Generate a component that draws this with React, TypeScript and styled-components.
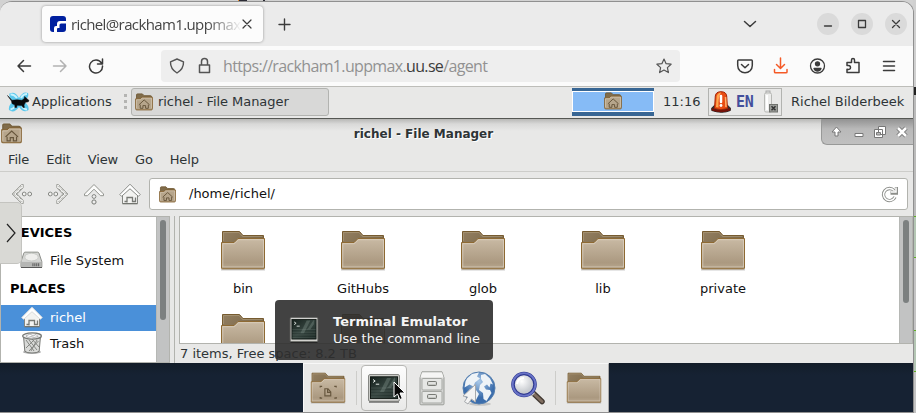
import React from "react";
import styled, { createGlobalStyle, css } from "styled-components";

const Global = createGlobalStyle`
  *{box-sizing:border-box}
  body{margin:0;overflow:hidden;background:#d3d3d3}
  svg{display:block;flex:none}
`;

const Screen = styled.div`
  position:relative;width:916px;height:413px;overflow:hidden;display:flex;
  background:#d2d2d2;font:13px/17px "DejaVu Sans",sans-serif;color:#2e3436;
`;
const Behind = styled.div`
  position:absolute;left:913px;top:0;width:3px;height:413px;
  background:linear-gradient(#d0d0d0 0 87px,#222 87px 95px,#bbb 95px 216px,#5eb01e 216px 217px,#b4c6b4 217px 257px,#5eb01e 257px 258px,#c4c4c4 258px 330px,#5eb01e 330px 331px,#b4c6b4 331px 371px,#5eb01e 371px 372px,#c4c4c4 372px);
`;
const TopHints = styled.div`
  position:absolute;left:238px;top:0;width:30px;height:2px;
  background:linear-gradient(90deg,#ef8b22 0 1px,#2b2b35 1px 9px,#ccc 9px 25px,#2b2b35 25px 27px,#ccc 27px);
`;
const Browser = styled.div`
  position:relative;width:914px;height:412px;margin-top:1px;display:flex;flex-direction:column;overflow:hidden;
  border:1px solid #909090;border-width:1px 1px 1px 0;border-radius:12px 12px 0 0;background:#ebebeb;
`;
const TabBar = styled.div`
  height:44px;flex:none;display:flex;align-items:flex-start;padding:4px 6px 0 42px;background:#ebebeb;
  font-family:"Open Sans","Noto Sans",sans-serif;
`;
const Tab = styled.div`
  width:221px;height:36px;display:flex;align-items:center;padding:0 9px 0 8px;border-radius:4px;
  background:#fcfcfc;box-shadow:0 0 3px rgba(0,0,0,.38);
`;
const TabTitle = styled.div`
  width:174px;margin-left:5px;white-space:nowrap;font-size:15px;line-height:24px;letter-spacing:-.62px;color:#444;
  mask-image:linear-gradient(90deg,#000 135px,transparent 171px);
`;
const TabClose = styled.div`margin-left:-3px;`;
const NewTab = styled.div`margin:12px 0 0 15px;`;
const TabTools = styled.div`margin-left:auto;height:36px;display:flex;align-items:center;gap:12px;`;
const ListTabs = styled.div`margin-right:48px;`;
const Round = styled.div`
  width:22px;height:22px;border-radius:50%;background:#dadada;display:grid;place-items:center;
`;
const NavBar = styled.div`
  height:40px;flex:none;display:flex;align-items:center;background:#fbfbfb;padding-left:16px;
`;
const NavIcons = styled.div`display:flex;width:145px;gap:20px;`;
const UrlBar = styled.div`
  width:519px;height:32px;border-radius:4px;background:#eee;display:flex;align-items:center;padding:0 8px;
`;
const Url = styled.div`
  margin-left:8px;flex:1;white-space:nowrap;font:16px/24px "Open Sans","Noto Sans",sans-serif;letter-spacing:-.65px;color:#929292;
  b{font-weight:400;color:#3c3c3c}
`;
const Lock = styled.div`margin-left:9px;margin-right:1px;`;
const NavTools = styled.div`display:flex;gap:16px;margin-left:55px;`;

const Panel = styled.div`
  height:32px;flex:none;display:flex;align-items:center;border-top:1px solid #bdbdb9;background:#e8e8e7;
  white-space:nowrap;padding:0 0 2px 7px;
`;
const AppsLabel = styled.div`width:84px;margin-left:2px;letter-spacing:.04px;`;
const Grip = styled.div`
  width:3px;height:15px;margin:0 4px 0 8px;background:repeating-linear-gradient(#b4b4b2 0 3px,transparent 3px 6px);
`;
const TaskButton = styled.div`
  width:198px;height:28px;display:flex;align-items:center;padding-left:3px;gap:5px;letter-spacing:-.05px;
  border:1px solid #b2b3b0;border-radius:3px;background:#d8d8d7;
`;
const Pager = styled.div`
  width:82px;height:28px;margin-left:243px;border:solid #386694;border-width:3px 0 4px;background:#fff;display:flex;padding:1px;
`;
const PagerWindow = styled.div`flex:1;background:#86bbf6;display:grid;place-items:center;`;
const Clock = styled.div`width:45px;margin-left:9px;`;
const Tray = styled.div`
  width:74px;height:28px;border:1px solid #b2b3b0;display:flex;align-items:center;padding-left:2px;
`;
const Lang = styled.div`
  margin-left:5px;width:26px;font:bold 15px/20px "DejaVu Sans Mono",monospace;letter-spacing:-.2px;color:#434f9c;
`;
const User = styled.div`margin-left:9px;`;

const Desktop = styled.div`flex:1;min-height:0;background:linear-gradient(#131d29 245px,#162233 257px);`;
const Manager = styled.div`
  height:245px;display:flex;flex-direction:column;border-top:1px solid #555753;background:#e8e8e7;overflow:hidden;
`;
const TitleBar = styled.div`
  height:27px;flex:none;display:flex;align-items:flex-start;background:linear-gradient(#b7b7b5,#d9d9d8 5px,#e8e8e7 12px);
`;
const TitleIcon = styled.div`padding:4px 0 0 1px;width:24px;`;
const Title = styled.div`flex:1;padding-top:7px;margin-left:2px;text-align:center;font-weight:bold;font-size:12px;text-shadow:1px 1px #fff;`;
const Controls = styled.div`
  width:92px;height:26px;display:flex;align-items:center;padding:0 0 0 4px;
  border:solid #989998;border-width:0 0 1px 1px;border-radius:0 0 0 6px;background:linear-gradient(#929292,#b9b9b9 10px,#c0c0c0);
`;
const MenuBar = styled.div`
  height:26px;flex:none;display:flex;gap:17px;padding:5px 0 0 8px;border-bottom:1px solid #cdcdca;letter-spacing:-.15px;
`;
const ToolBar = styled.div`height:44px;flex:none;display:flex;align-items:center;padding:0 5px 0 9px;`;
const ToolIcons = styled.div`display:flex;width:140px;gap:14px;padding-left:2px;`;
const PathBar = styled.div`
  flex:1;height:32px;border:1px solid #b2b3ae;border-radius:3px;background:#fff;color:#111;
  display:flex;align-items:center;padding:0 9px;
`;
const PathText = styled.div`flex:1;margin-left:13px;padding-bottom:1px;`;
const Body = styled.div`flex:1;min-height:0;display:flex;`;
const Side = styled.div`
  width:170px;border:1px solid #b2b3ae;display:flex;background:#fff;color:#111;
`;
const SideList = styled.div`width:155px;white-space:nowrap;`;
const Heading = styled.div`
  height:32px;display:flex;align-items:center;padding:0 0 1px 9px;font-weight:bold;color:#000;
`;
const Place = styled.div<{ $active?: boolean; $h: number }>`
  height:${p => p.$h}px;display:flex;align-items:center;gap:7px;padding:0 0 2px 19px;letter-spacing:-.03px;
  ${p => p.$active && css`background:#4a90d9;color:#fff;`}
`;
const PlaceIcon = styled.div`width:23px;display:grid;place-items:center;`;
const ScrollTrack = styled.div`
  flex:1;background:#c2c3c3;padding:3px 3px;border-left:1px solid #b6b8b5;display:flex;justify-content:center;
`;
const Thumb = styled.div<{ $h: number }>`width:6px;height:${p => p.$h}px;border-radius:3px;background:#7c8080;`;
const Splitter = styled.div`width:5px;border-right:1px solid #b2b3ae;`;
const Main = styled.div`flex:1;min-width:0;padding-left:4px;display:flex;flex-direction:column;`;
const FileView = styled.div`
  height:128px;flex:none;border:1px solid #b2b3ae;background:#fff;display:flex;overflow:hidden;
`;
const Grid = styled.div`
  width:719px;flex:none;display:grid;grid-template-columns:repeat(5,120px);grid-auto-rows:83px;padding:13px 0 0 3px;color:#111;
`;
const File = styled.div`display:flex;flex-direction:column;align-items:center;gap:9px;`;
const Status = styled.div`padding:1px 0 0 1px;white-space:nowrap;`;

const Handle = styled.div`
  position:absolute;left:0;top:202px;width:22px;height:62px;border-radius:0 5px 5px 0;background:#d9d9d5;
  border:1px solid #c4c4c0;border-left:0;display:grid;place-items:center;padding-bottom:1px;
`;
const Tooltip = styled.div`
  position:absolute;left:275px;top:300px;width:218px;height:60px;border-radius:4px;background:rgba(45,45,45,.9);
  display:flex;align-items:center;padding-left:14px;gap:14px;color:#f5f5f5;white-space:nowrap;letter-spacing:.03px;
`;
const TipTitle = styled.div`font-weight:bold;`;
const Dock = styled.div`
  position:absolute;left:303px;top:363px;width:306px;height:49px;background:#e8e8e7;border:1px solid #f8f8f8;border-right-color:#aaa;border-bottom:0;
  display:flex;align-items:center;
`;
const DockItem = styled.div<{ $hot?: boolean }>`
  width:${p => p.$hot ? 46 : 48}px;height:46px;display:grid;place-items:center;
  ${p => p.$hot && css`background:linear-gradient(#fdfdfd,#e9e9e8);border:1px solid #b7b7b4;border-radius:4px;margin-right:1px;`}
`;
const DockLine = styled.div`width:1px;height:34px;background:#cdcdca;margin:0 4px;`;
const Cursor = styled.div`position:absolute;left:393px;top:381px;`;

const Folder = ({ w = 46, h = 41, mark = false }: { w?: number; h?: number; mark?: boolean }) => {
  const id = React.useId();
  return (
    <svg width={w} height={h} viewBox="0 0 46 41">
      <defs>
        <linearGradient id={id + "f"} x2="0" y2="1"><stop stopColor="#c9baa4" /><stop offset=".8" stopColor="#ab9980" /><stop offset="1" stopColor="#b9a890" /></linearGradient>
        <linearGradient id={id + "b"} x2="1" y2="1"><stop stopColor="#937f61" /><stop offset="1" stopColor="#695636" /></linearGradient>
      </defs>
      <path d="M1 39.500h44" stroke="#000" strokeOpacity=".2" strokeWidth="2" />
      <path d="M2.500 38V1.500h17l3.500 4h20.500V38z" fill={`url(#${id}b)`} stroke="#765b30" />
      <path d="M3.500 11V2.500H19l3.500 4h20" fill="none" stroke="#ac9978" strokeWidth=".7" />
      <path d="M1.500 12.500H14l4-4h26.500v29.500q0 .8-1 .8h-41q-1 0-1-.8z" fill={`url(#${id}f)`} stroke="#8e6a33" />
      <path d="M2.800 37V13.700H14.500l4-4h25V37" fill="none" stroke="#e4dacb" strokeWidth=".9" opacity=".65" />
      <path d="M2.500 36.500h41" stroke="#d0c4b1" opacity=".5" />
      {mark && <path d="M19 21.500h4l3.500 4v5h-7.500zM22.500 22v4h4M13 20v-1.500h2.500M31 18.500h2.500V20M13 32v1.500h2.500M31 33.500h2.500V32" fill="none" stroke="#67573e" strokeWidth="1.500" />}
    </svg>
  );
};

const HomeFolder = ({ s = 18 }: { s?: number }) => (
  <svg width={s} height={s} viewBox="0 0 20 20">
    <path d="M1.700 17V2q0-1 1-1h5.500l2 2h7q1.200 0 1.200 1v13z" fill="#806c4b" stroke="#715a35" />
    <path d="M.7 6.500h5l2-1.800h11.600v12.800q0 1.300-1.200 1.300H2q-1.300 0-1.300-1.300z" fill="#b6a58b" stroke="#825f2d" />
    <path d="M1.700 17V7.500H6l2-1.800h10.300V17" fill="none" stroke="#d5c8b4" strokeWidth=".8" />
    <path d="M4.300 13.200 10.200 7.700l6 5.500M5.800 13v4h3v-3h3v3h3v-4" fill="none" stroke="#67563c" strokeWidth="1.100" />
  </svg>
);

const House = ({ solid = false }: { solid?: boolean }) => (
  <svg width="22" height="22" viewBox="0 0 22 22">
    <path d="M3.500 11v9.500h15V11L11 5z" fill="#f3f3f1" stroke="#858783" />
    <path d="M5.500 18.500h2.500v-4h5.500v4h3v-4M8 14.500v5" fill="none" stroke="#777974" strokeWidth="1.300" />
    <path d="M.8 11.500 11 1.200l10.200 10.300-1.800 1.800L11 5.800l-8.400 7.500z" fill="#fff" stroke={solid ? "#ddd" : "#8a8c88"} strokeLinejoin="round" />
    <path d="M3.500 20.800h15" stroke="#6c6e69" />
  </svg>
);

const Arrow = ({ flip = false }: { flip?: boolean }) => (
  <svg width="22" height="22" viewBox="0 0 22 22">
    <g transform={flip ? "matrix(-1 0 0 1 22 0)" : undefined}>
      <path d="M1 11 10.500 1.500h1.800v3.200L6.200 11l6.100 6.300v3.200h-1.800z" fill="#f1f1ef" stroke="#a4a5a0" strokeLinejoin="round" />
      <path d="m2.500 11 8.500-8.500m-6 8.500 6-6m-6 6 6 6m-8.500-6 8.500 8.500" stroke="#777974" strokeDasharray="1 1" fill="none" />
      <circle cx="13.200" cy="11" r="1.900" fill="#f1f1ef" stroke="#858783" />
      <circle cx="18.700" cy="11" r="1.900" fill="#f1f1ef" stroke="#858783" />
    </g>
  </svg>
);

const UpArrow = () => (
  <svg width="22" height="22" viewBox="0 0 22 22">
    <path d="M1.500 11 11 1.500l9.500 9.500v1.700h-3L11 6.200l-6.500 6.500h-3z" fill="#fbfbfa" stroke="#92948f" strokeLinejoin="round" />
    <circle cx="11" cy="13.500" r="1.900" fill="#eee" stroke="#858783" /><circle cx="11" cy="19" r="2.100" fill="#eee" stroke="#777974" />
  </svg>
);

const Terminal = ({ w, h }: { w: number; h: number }) => {
  const id = React.useId();
  return (
    <svg width={w} height={h} viewBox="0 0 32 29">
      <defs><linearGradient id={id} x2="1" y2="1"><stop stopColor="#15201c" /><stop offset=".5" stopColor="#34433e" /><stop offset="1" stopColor="#1b2824" /></linearGradient></defs>
      <path d="M1 28h30" stroke="#000" strokeOpacity=".4" strokeWidth="2" />
      <rect x=".7" y=".7" width="30.600" height="26.500" rx="1" fill="#dfdfdc" stroke="#6d6e6a" />
      <rect x="2.500" y="2.800" width="27" height="21.800" fill={`url(#${id})`} stroke="#111915" />
      <path d="M12 18 19 4h4l-7 14zM21 12l6-9v5l-4 6h-4z" fill="#7b8b85" opacity=".4" />
      <path d="m5 5.500 2.200 1.500L5 8.500M7.800 10.200h3.400" stroke="#e2e8e4" fill="none" />
      <path d="M3 14h26M3 17h26M3 20h26M3 23h26" stroke="#97a59f" opacity=".2" />
    </svg>
  );
};

const Drive = () => (
  <svg width="23" height="18" viewBox="0 0 24 18">
    <path d="M5.300.8h13q1 0 1.500 1l3 9v5q0 1-1 1H2q-1 0-1-1v-5l3-9q.4-1 1.300-1z" fill="#d4d5d3" stroke="#888a85" />
    <ellipse cx="12" cy="6" rx="7" ry="4" fill="#eeeeec" stroke="#c8cac6" />
    <path d="M1.500 11h20.800v5H1.500z" fill="#b5b6b4" /><path d="M13 14h7" stroke="#555" strokeWidth="3" strokeDasharray="1 1" /><path d="M1 16.800h22" stroke="#555" />
  </svg>
);

const Trash = () => (
  <svg width="22" height="22" viewBox="0 0 22 22">
    <ellipse cx="11" cy="20" rx="9" ry="1.800" fill="#555" opacity=".5" />
    <path d="m2.500 4 1.300 15q1 2 7.200 2t7.200-2l1.300-15z" fill="#d9dad8" stroke="#777975" />
    <path d="m5 8 8 11m-5-11 8 10m-5-11 7 8m-.5-6L8 19m5-11-8 8m11-8-6 11" stroke="#858783" />
    <ellipse cx="11" cy="4" rx="9.400" ry="3.100" fill="#eee" stroke="#777975" strokeWidth="1.300" />
    <path d="m5 4 4-2 3 2 3-1.500 2 2-4 1-3-1-3 1z" fill="#fff" stroke="#999" strokeWidth=".7" />
  </svg>
);

const Cabinet = () => (
  <svg width="26" height="35" viewBox="0 0 26 35">
    <path d="M3 .8h20l2 6v26q0 1-1 1H2q-1 0-1-1v-26z" fill="#d4d5d3" stroke="#9b9d99" />
    <path d="M3 1.500h20l1.500 5h-23z" fill="#f5f5f4" />
    {[7.5, 20.5].map((y) => (
      <g key={y}>
        <rect x="3" y={y} width="20" height="11.500" rx="1" fill="#e6e7e5" stroke="#a5a7a3" />
        <rect x="8.500" y={y + 3} width="9" height="4" rx="1" fill="#c4c6c2" stroke="#787a75" />
        <path d={`M9.500 ${y + 4.5}h7`} stroke="#fff" />
      </g>
    ))}
  </svg>
);

const Globe = () => (
  <svg width="34" height="35" viewBox="0 0 34 35">
    <defs><radialGradient id="sea" cy=".3"><stop stopColor="#a9c8e8" /><stop offset="1" stopColor="#3b6dac" /></radialGradient></defs>
    <ellipse cx="18" cy="33" rx="11" ry="1.800" opacity=".15" />
    <circle cx="17" cy="17" r="16" fill="url(#sea)" stroke="#547eae" />
    <path d="M5 7.500 10 3l7-1.500-2 4 3 2-5 4-1.500 4-4-2-5 3 1-6zM19 4l4-1 5 4.500 3 6-2.500-1-1 4-2.500-3-3 2 2 3 4 .5 1.500 3-5 8-3-2-.5-6-4-3 1-5 3-3-2-3zM8 18l6 1 3 4-4 8-3-2-1-5-3-3z" fill="#eef3f7" />
    <path d="M13.500 13.500v17.500l-4-3-3.500 5-3.500-2.300 3-4.700-4.500-1z" fill="#f3f3f3" stroke="#a6a9ac" strokeLinejoin="round" />
  </svg>
);

const Magnifier = () => (
  <svg width="35" height="35" viewBox="0 0 35 35">
    <defs><radialGradient id="lens" cx=".4" cy=".35"><stop stopColor="#fff" /><stop offset="1" stopColor="#c8cbd0" /></radialGradient></defs>
    <path d="m22 21 10 9.500" stroke="#403831" strokeWidth="5.500" strokeLinecap="round" /><path d="m24 23 8 7.500" stroke="#806e60" strokeWidth="3" strokeLinecap="round" /><path d="m20.500 20.500 3 3" stroke="#c8c9ca" strokeWidth="4" />
    <circle cx="14" cy="13.500" r="11" fill="url(#lens)" stroke="#2f3990" strokeWidth="3.600" /><circle cx="14" cy="13.500" r="11.300" fill="none" stroke="#6973c7" strokeWidth="1.800" />
    <path d="M7 13q1-6 7-6" stroke="#fff" strokeWidth="2" fill="none" />
  </svg>
);

const Line = ({ d, s = 20, c = "#3b3b3b", w = 1.5, children }: { d: string; s?: number; c?: string; w?: number; children?: React.ReactNode }) => (
  <svg width={s} height={s} viewBox={`0 0 ${s} ${s}`} fill="none" stroke={c} strokeWidth={w} strokeLinecap="round" strokeLinejoin="round"><path d={d} />{children}</svg>
);

const Xfce = () => (
  <svg width="23" height="20" viewBox="0 0 23 20">
    <path d="M2.500 1.500Q8-1.500 12 6q4-7.500 9-5 1.500 4-4 8.500 5.500 4 4.500 8.500-5 3.500-9.500-3-5 7-10 3-1-5 4.500-8.500-5-3.500-4-8z" fill="#5cc8ec" />
    <path d="M3.500 2.500Q7 2 10 6M20 2q-4 0-6 4M3.500 17.500Q6 17 8 14.500M20 17.500q-3 0-5-3" stroke="#c9f2fd" strokeWidth="2" fill="none" />
    <path d="m.5 3.500 4.500 4.800Q10 7.300 15 8.300L17.300 6.500l.3-2L19.200 6l2.800 2.500-.7 1.300-2.800.5-1.500 2.700.4 2.500H16l-1.200-2-4.800-.2-.4 2.200H7.800l.1-2.500L5 11.500 4.500 9z" fill="#08090a" stroke="#08090a" strokeWidth=".5" />
  </svg>
);

const Alarm = () => (
  <svg width="20" height="22" viewBox="0 0 20 22">
    <path d="m.8 17 3-3h12.500l3 3v2.500q-8 3.500-18.500 0z" fill="#333" stroke="#222" />
    <path d="M3.500 17.500 4.300 5q.5-4.300 5.700-4.300T15.700 5l.8 12.500Q10 20 3.500 17.500z" fill="#e84d13" stroke="#a52708" />
    <path d="M5 16 5.700 5Q7 1.500 10 1.500q-3 5-2.500 15z" fill="#ffa64e" /><path d="M14.500 6 15 16" stroke="#ffb16c" strokeWidth="1.500" />
    <path d="M10 5v6" stroke="#fff" strokeWidth="2.500" strokeLinecap="round" /><circle cx="10" cy="14.500" r="1.400" fill="#fff" />
    <path d="M.8 17q9 4 18.400 0v2.500q-9 3.500-18.400 0z" fill="#751209" />
  </svg>
);

const Battery = () => (
  <svg width="16" height="24" viewBox="0 0 16 24">
    <rect x="4" y="1" width="4" height="3" fill="#ddd" stroke="#aaa" /><rect x="2.500" y="3" width="7" height="19" rx="1.500" fill="#ececeb" stroke="#b7b8b5" /><path d="M5 5v15" stroke="#fff" strokeWidth="2" />
    <rect x="7.500" y="14.500" width="8" height="7.500" fill="#9a9c98" stroke="#70726e" /><path d="m9.500 16.300 4 4m0-4-4 4" stroke="#333" strokeWidth="1.500" />
  </svg>
);

const Glyph = ({ d }: { d: string }) => (
  <svg width="22" height="20" viewBox="0 0 22 20"><path d={d} fill="#fff" stroke="#777" /></svg>
);

export default function App() {
  return (
    <>
      <Global />
      <Screen>
        <Behind /><TopHints />
        <Browser>
          <TabBar>
            <Tab>
              <svg width="16" height="16" viewBox="0 0 16 16"><rect width="16" height="16" rx="3" fill="#00209f" /><path d="M4 16v-4q0-2 2-2h1V8q0-3 3-3h6v2.500h-5q-1.500 0-1.500 1.500V12H8q-1 0-1 1v3z" fill="#fff" /></svg>
              <TabTitle>richel@rackham1.uppmax</TabTitle>
              <TabClose><Line s={14} w={1.2} d="m3 3 8 8m0-8-8 8" /></TabClose>
            </Tab>
            <NewTab><Line s={13} w={1.4} d="M6.500 1v11M1 6.500h11" /></NewTab>
            <TabTools>
              <ListTabs><Line s={14} d="m1.500 4.500 5.500 5 5.500-5" /></ListTabs>
              <Round><Line s={12} w={1.3} d="M2.500 8h7" /></Round>
              <Round><Line s={12} w={1.3} d="M2.500 2.500h7v7h-7z" /></Round>
              <Round><Line s={12} w={1.3} d="m2.500 2.500 7 7m0-7-7 7" /></Round>
            </TabTools>
          </TabBar>
          <NavBar>
            <NavIcons>
              <Line s={16} d="M14.500 8H2m5.500-5.500L2 8l5.500 5.500" />
              <Line s={16} c="#b2b2b2" d="M1.500 8H14M8.500 2.500 14 8l-5.500 5.500" />
              <Line s={16} d="M13.500 5A6.500 6.500 0 1 0 14.500 8M14.500 1v5h-5" />
            </NavIcons>
            <UrlBar>
              <Line s={16} c="#555" w={1.4} d="m8 1 6.500 2.800Q14.800 11 8 15 1.200 11 1.500 3.800z" />
              <Lock><Line s={20} c="#555" d="M5.500 9h10v7.500h-10zM7.500 9V5.500q0-3 3-3t3 3V9" /></Lock>
              <Url>https://rackham1.uppmax.<b>uu.se</b>/agent</Url>
              <Line s={16} w={1.2} c="#555" d="m8 1 2.100 4.700 5 .5-3.700 3.400 1 5L8 12l-4.400 2.600 1-5L.9 6.200l5-.5z" />
            </UrlBar>
            <NavTools>
              <Line d="M3.500 4h13q.8 0 .8 1v4.500q0 3-2.200 5.200Q13 16.700 10 16.700t-5.100-2Q2.700 12.500 2.700 9.500V5q0-1 .8-1zM6.500 8.500 10 11.800l3.500-3.300" />
              <Line c="#f45a27" d="M9.500 2v10M5.500 8.500l4 4 4-4M3.500 13.500V16q0 .8 1 .8h10.500q1 0 1-.8v-2.500" />
              <Line w={1.3} d="M10.500 3a7 7 0 1 1 0 14 7 7 0 0 1 0-14z"><circle cx="10.500" cy="7.800" r="2" fill="#3b3b3b" /><path d="M7 12.500h7q-1 2.500-3.500 2.500t-3.500-2.500z" fill="#3b3b3b" /></Line>
              <Line d="M4 16.500v-3.200q3.500.7 3.500-1.800t-3.500-2V6.500h4.500V4q0-1.500 1.500-1.500T11.500 4v2.500H16v10z" />
              <Line d="M4.500 5.500h11M4.500 10h11M4.500 14.500h11" />
            </NavTools>
          </NavBar>
          <Panel>
            <Xfce /><AppsLabel>Applications</AppsLabel>
            <Grip />
            <TaskButton><HomeFolder /><span>richel - File Manager</span></TaskButton>
            <Pager><PagerWindow><HomeFolder /></PagerWindow></Pager>
            <Clock>11:16</Clock>
            <Tray><Alarm /><Lang>EN</Lang><Battery /></Tray>
            <User>Richel Bilderbeek</User>
          </Panel>
          <Desktop>
            <Manager>
              <TitleBar>
                <TitleIcon><HomeFolder s={21} /></TitleIcon>
                <Title>richel - File Manager</Title>
                <Controls>
                  <Glyph d="M10.500 5 6 10h3v4h3v-4h3z" />
                  <Glyph d="M7 11.500h8v3H7z" />
                  <svg width="22" height="20" viewBox="0 0 22 20"><path d="M8.500 4.500h7v8h-7zM4.500 7.500h8v8h-8z" fill="#fff" stroke="#777" /><path d="M6.500 10.500h4v2.500h-4z" fill="#bbb" stroke="#777" /></svg>
                  <svg width="20" height="20" viewBox="0 0 20 20"><path d="m6 6 8 8m0-8-8 8" stroke="#777" strokeWidth="4.500" /><path d="m6 6 8 8m0-8-8 8" stroke="#fff" strokeWidth="2.500" /></svg>
                </Controls>
              </TitleBar>
              <MenuBar>{["File", "Edit", "View", "Go", "Help"].map((m) => <span key={m}>{m}</span>)}</MenuBar>
              <ToolBar>
                <ToolIcons><Arrow /><Arrow flip /><UpArrow /><House /></ToolIcons>
                <PathBar>
                  <HomeFolder s={17} /><PathText>/home/richel/</PathText>
                  <svg width="17" height="17" viewBox="0 0 17 17" fill="none"><path d="M13 4.500A6 6 0 1 0 14 11M15.500 1v6h-6" stroke="#8d8f8b" strokeWidth="3.300" /><path d="M13 4.500A6 6 0 1 0 14 11M15 1.500V6h-5" stroke="#fff" strokeWidth="1.500" /></svg>
                </PathBar>
              </ToolBar>
              <Body>
                <Side>
                  <SideList>
                    <Heading>DEVICES</Heading>
                    <Place $h={24}><PlaceIcon><Drive /></PlaceIcon>File System</Place>
                    <Heading>PLACES</Heading>
                    <Place $h={26} $active><PlaceIcon><House solid /></PlaceIcon>richel</Place>
                    <Place $h={26}><PlaceIcon><Trash /></PlaceIcon>Trash</Place>
                  </SideList>
                  <ScrollTrack><Thumb $h={100} /></ScrollTrack>
                </Side>
                <Splitter />
                <Main>
                  <FileView>
                    <Grid>
                      {["bin", "GitHubs", "glob", "lib", "private", "", ""].map((n, i) => <File key={i}><Folder /><span>{n}</span></File>)}
                    </Grid>
                    <ScrollTrack><Thumb $h={83} /></ScrollTrack>
                  </FileView>
                  <Status>7 items, Free space: 8.2 TB</Status>
                </Main>
              </Body>
            </Manager>
          </Desktop>
        </Browser>
        <Handle><svg width="12" height="20" viewBox="0 0 12 20"><path d="m2 1 8 9-8 9" fill="none" stroke="#222" strokeWidth="1.200" /></svg></Handle>
        <Tooltip>
          <Terminal w={30} h={26} />
          <div><TipTitle>Terminal Emulator</TipTitle>Use the command line</div>
        </Tooltip>
        <Dock>
          <DockItem><Folder w={36} h={32} mark /></DockItem>
          <DockLine />
          <DockItem $hot><Terminal w={32} h={29} /></DockItem>
          <DockItem><Cabinet /></DockItem>
          <DockItem><Globe /></DockItem>
          <DockItem><Magnifier /></DockItem>
          <DockLine />
          <DockItem><Folder w={36} h={32} /></DockItem>
        </Dock>
        <Cursor><svg width="13" height="20" viewBox="0 0 13 20"><path d="M1 1v15l3.500-3 2.300 5.500 2.500-1L7 12h5z" fill="#080808" stroke="#fff" /></svg></Cursor>
      </Screen>
    </>
  );
}
